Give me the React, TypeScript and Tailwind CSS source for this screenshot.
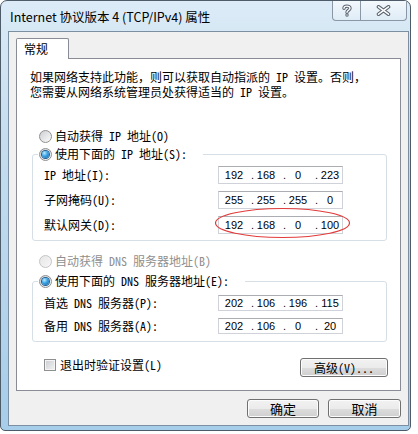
import React from 'react'

const cjk = "font-['Noto_Sans_Mono_CJK_SC','Noto_Sans_CJK_SC',sans-serif]"
const winBtn =
  'rounded-[3px] border border-[#707070] bg-[linear-gradient(180deg,#f2f2f2_0%,#ebebeb_50%,#dddddd_51%,#cfcfcf_100%)] shadow-[inset_0_0_0_1px_#fcfcfc] flex items-center justify-center'

function Radio({ checked, disabled }: { checked?: boolean; disabled?: boolean }) {
  return (
    <span
      className={
        disabled
          ? 'w-[13px] h-[13px] rounded-full border border-[#c5c5c5] bg-[linear-gradient(135deg,#e6e6e6,#f7f7f7)] flex items-center justify-center'
          : 'w-[13px] h-[13px] rounded-full border border-[#8e8f8f] bg-[linear-gradient(135deg,#cdd0d4,#fbfbfb)] flex items-center justify-center'
      }
    >
      {checked && (
        <span className="w-[7px] h-[7px] rounded-full bg-[radial-gradient(circle_at_35%_30%,#b8ecff_0%,#3aa2e4_45%,#0d5ea8_100%)] shadow-[0_0_0_1px_#1b5f96]" />
      )}
    </span>
  )
}

function IpBox({ parts, tall }: { parts: string[]; tall?: boolean }) {
  return (
    <div
      className={`flex items-center w-[125px] ${tall ? 'h-[18px]' : 'h-[16px]'} border border-[#cfd3d9] border-t-[#abadb3] bg-white pl-[3px] font-['Liberation_Sans',sans-serif] text-[11px] text-black`}
    >
      {parts.map((p, i) => (
        <React.Fragment key={i}>
          {i > 0 && <span className="w-[8px] text-right">.</span>}
          <span className="w-[24px] text-center">{p}</span>
        </React.Fragment>
      ))}
    </div>
  )
}

function Field({ label, parts, tall }: { label: string; parts: string[]; tall?: boolean }) {
  return (
    <div className="flex items-center pl-[11px]">
      <span className="w-[174px] leading-[16px]">{label}</span>
      <IpBox parts={parts} tall={tall} />
    </div>
  )
}

function GroupLegend({ text }: { text: string }) {
  return (
    <legend className="ml-[5px] bg-white">
      <div className="flex items-center gap-[3px] h-[16px] pl-[1px] pr-[16px]">
        <Radio checked />
        <span>{text}</span>
      </div>
    </legend>
  )
}

export default function App() {
  return (
    <div className={`relative w-[418px] h-[434px] bg-white text-[12px] text-black ${cjk}`}>
      <div className="w-[411px] h-[431px] flex flex-col rounded-t-[7px] rounded-b-[5px] border border-[#4e5b69] bg-[linear-gradient(180deg,#dcebf7_0%,#c6deef_30%,#b5d4ec_70%,#a6cdea_100%)]">
        {/* title bar */}
        <div className="h-[30px] flex items-start justify-between">
          <div className="pl-[9px] pt-[8px] text-[12.5px] leading-[16px] font-['Noto_Sans_CJK_SC',sans-serif]">
            Internet 协议版本 4 (TCP/IPv4) 属性
          </div>
          <div className="mr-[3px] flex h-[20px] rounded-b-[4px] border border-t-0 border-[#8a97a5] bg-[linear-gradient(180deg,#f3f8fc,#dfecf6)] overflow-hidden">
            <div className="w-[28px] flex items-center justify-center border-r border-[#8a97a5]">
              <svg width="10" height="13" viewBox="0 0 10 13">
                <path d="M2 4.2 C2 1.5 8 1.3 8 4.2 C8 6.2 5 6.3 5 8.3" fill="none" stroke="#5b6470" strokeWidth="3.4" strokeLinecap="round" />
                <circle cx="5" cy="11" r="1.7" fill="#5b6470" />
                <path d="M2 4.2 C2 1.5 8 1.3 8 4.2 C8 6.2 5 6.3 5 8.3" fill="none" stroke="#ffffff" strokeWidth="1.4" strokeLinecap="round" />
                <circle cx="5" cy="11" r="0.7" fill="#ffffff" />
              </svg>
            </div>
            <div className="w-[45px] flex items-center justify-center">
              <svg width="15" height="11" viewBox="0 0 15 11">
                <path d="M2.5 1.8 L12.5 9.2 M12.5 1.8 L2.5 9.2" stroke="#5b6470" strokeWidth="3.6" strokeLinecap="round" />
                <path d="M2.5 1.8 L12.5 9.2 M12.5 1.8 L2.5 9.2" stroke="#ffffff" strokeWidth="1.5" strokeLinecap="round" />
              </svg>
            </div>
          </div>
        </div>

        {/* client area */}
        <div className="ml-[7px] w-[401px] h-[395px] border border-[#7c8ea2] bg-[#f0f0f0] pl-[7px] pt-[6px]">
          <div className="relative -mb-px w-[53px] h-[21px] border border-b-0 border-[#898c95] bg-white rounded-t-[2px] flex items-center pl-[7px] text-[12px] font-['Noto_Sans_CJK_SC',sans-serif]">
            常规
          </div>
          <div className="w-[385px] h-[333px] border border-[#898c95] bg-white flex flex-col">
            <div className="mt-[10px] ml-[13px] leading-[15px]">
              <div>如果网络支持此功能，则可以获取自动指派的 IP 设置。否则，</div>
              <div>您需要从网络系统管理员处获得适当的 IP 设置。</div>
            </div>

            <div className="mt-[29px] ml-[22px] flex items-center gap-[3px] h-[16px]">
              <Radio />
              <span>自动获得 IP 地址(O)</span>
            </div>

            <fieldset className="mt-[2px] ml-[15px] w-[355px] rounded-[3px] border border-[#d5dfe5] pb-[6px]">
              <GroupLegend text="使用下面的 IP 地址(S):" />
              <div className="mt-[4px] flex flex-col gap-[7px]">
                <Field label="IP 地址(I):" parts={['192', '168', '0', '223']} tall />
                <Field label="子网掩码(U):" parts={['255', '255', '255', '0']} tall />
                <Field label="默认网关(D):" parts={['192', '168', '0', '100']} tall />
              </div>
            </fieldset>

            <div className="mt-[12px] ml-[22px] flex items-center gap-[3px] h-[16px] text-[#8f8f8f]">
              <Radio disabled />
              <span>自动获得 DNS 服务器地址(B)</span>
            </div>

            <fieldset className="mt-[4px] ml-[15px] w-[355px] rounded-[3px] border border-[#d5dfe5] pb-[7px]">
              <GroupLegend text="使用下面的 DNS 服务器地址(E):" />
              <div className="mt-[6px] flex flex-col gap-[7px]">
                <Field label="首选 DNS 服务器(P):" parts={['202', '106', '196', '115']} />
                <Field label="备用 DNS 服务器(A):" parts={['202', '106', '0', '20']} />
              </div>
            </fieldset>

            <div className="mt-[14px] ml-[27px] mr-[12px] flex items-start justify-between">
              <div className="flex items-center gap-[4px] h-[18px]">
                <span className="w-[12px] h-[12px] border border-[#8e8f8f] bg-[linear-gradient(135deg,#c9ccd1,#f4f4f4)] shadow-[inset_0_0_0_1px_#f4f4f4]" />
                <span>退出时验证设置(L)</span>
              </div>
              <button className={`mt-[2px] w-[88px] h-[19px] ${winBtn}`}>高级(V)...</button>
            </div>
          </div>

          <div className="mt-[8px] w-[385px] flex justify-end gap-[9px]">
            <button className={`w-[72px] h-[19px] text-[13px] font-['Noto_Sans_CJK_SC',sans-serif] ${winBtn}`}>确定</button>
            <button className={`w-[73px] h-[19px] text-[13px] font-['Noto_Sans_CJK_SC',sans-serif] ${winBtn}`}>取消</button>
          </div>
        </div>
      </div>

      {/* red annotation ellipse */}
      <svg className="absolute left-[214px] top-[207px]" width="137" height="32" viewBox="0 0 137 32">
        <ellipse cx="68.5" cy="16" rx="67" ry="14.5" fill="none" stroke="#e23b3b" strokeWidth="1.2" />
      </svg>
    </div>
  )
}
